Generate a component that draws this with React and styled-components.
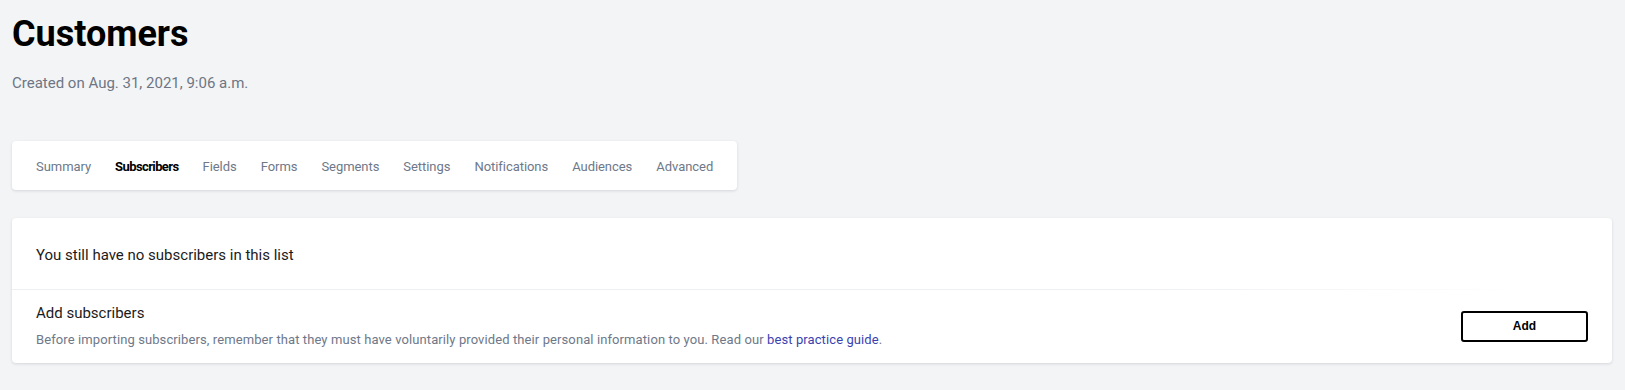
import styled, { createGlobalStyle } from "styled-components";

const GlobalStyle = createGlobalStyle`
  body {
    margin: 0;
    background: #f3f4f6;
    font-family: Roboto, "Liberation Sans", sans-serif;
    color: #1b1b1b;
  }
`;

const Page = styled.main`
  padding: 12px 13px 24px 12px;
`;

const Title = styled.h1`
  margin: 0;
  font-size: 36px;
  line-height: 44px;
  font-weight: 700;
  color: #000;
`;

const Created = styled.p`
  margin: 17px 0 0 0;
  font-size: 15px;
  line-height: 20px;
  color: #6d7684;
`;

const TabsCard = styled.nav`
  margin-top: 48px;
  width: 725px;
  height: 49px;
  padding: 2px 12px 0 12px;
  box-sizing: border-box;
  display: flex;
  align-items: center;
  background: #fff;
  border-radius: 4px;
  box-shadow: 0 1px 3px rgba(20, 30, 50, 0.14);
`;

const Tab = styled.a`
  padding: 0 12px;
  font-size: 13px;
  line-height: 18px;
  color: ${(p) => (p.$active ? "#000" : "#6e7889")};
  font-weight: ${(p) => (p.$active ? 700 : 400)};
  letter-spacing: ${(p) => (p.$active ? "-0.6px" : "-0.05px")};
  cursor: pointer;
`;

const Card = styled.section`
  margin-top: 28px;
  background: #fff;
  border-radius: 4px;
  box-shadow: 0 1px 3px rgba(20, 30, 50, 0.14);
`;

const EmptyRow = styled.div`
  padding: 27px 24px 24px 24px;
  font-size: 15px;
  line-height: 20px;
  color: #1b1b1b;
`;

const Divider = styled.div`
  height: 1px;
  background: linear-gradient(to right, #eeeff1 0%, #eeeff1 70%, rgba(238, 239, 241, 0) 95%);
`;

const AddRow = styled.div`
  display: flex;
  align-items: center;
  justify-content: space-between;
  padding: 13px 24px 14px 24px;
`;

const AddText = styled.div`
  display: flex;
  flex-direction: column;
  gap: 8px;
`;

const AddTitle = styled.div`
  font-size: 15px;
  line-height: 20px;
  color: #1b1b1b;
`;

const AddHint = styled.div`
  font-size: 13px;
  line-height: 18px;
  letter-spacing: 0.1px;
  color: #6e7889;
`;

const Link = styled.a`
  color: #3b3fb0;
  text-decoration: none;
`;

const AddButton = styled.button`
  width: 127px;
  height: 31px;
  background: #fff;
  border: 2px solid #000;
  border-radius: 3px;
  font-family: "Liberation Sans", Arial, sans-serif;
  font-size: 12px;
  font-weight: 700;
  color: #000;
  cursor: pointer;
`;

const tabs = [
  "Summary",
  "Subscribers",
  "Fields",
  "Forms",
  "Segments",
  "Settings",
  "Notifications",
  "Audiences",
  "Advanced",
];

export default function App() {
  return (
    <>
      <GlobalStyle />
      <Page>
        <Title>Customers</Title>
        <Created>Created on Aug. 31, 2021, 9:06 a.m.</Created>
        <TabsCard>
          {tabs.map((t) => (
            <Tab key={t} $active={t === "Subscribers"}>
              {t}
            </Tab>
          ))}
        </TabsCard>
        <Card>
          <EmptyRow>You still have no subscribers in this list</EmptyRow>
          <Divider />
          <AddRow>
            <AddText>
              <AddTitle>Add subscribers</AddTitle>
              <AddHint>
                Before importing subscribers, remember that they must have voluntarily provided their
                personal information to you. Read our <Link>best practice guide</Link>.
              </AddHint>
            </AddText>
            <AddButton>Add</AddButton>
          </AddRow>
        </Card>
      </Page>
    </>
  );
}
